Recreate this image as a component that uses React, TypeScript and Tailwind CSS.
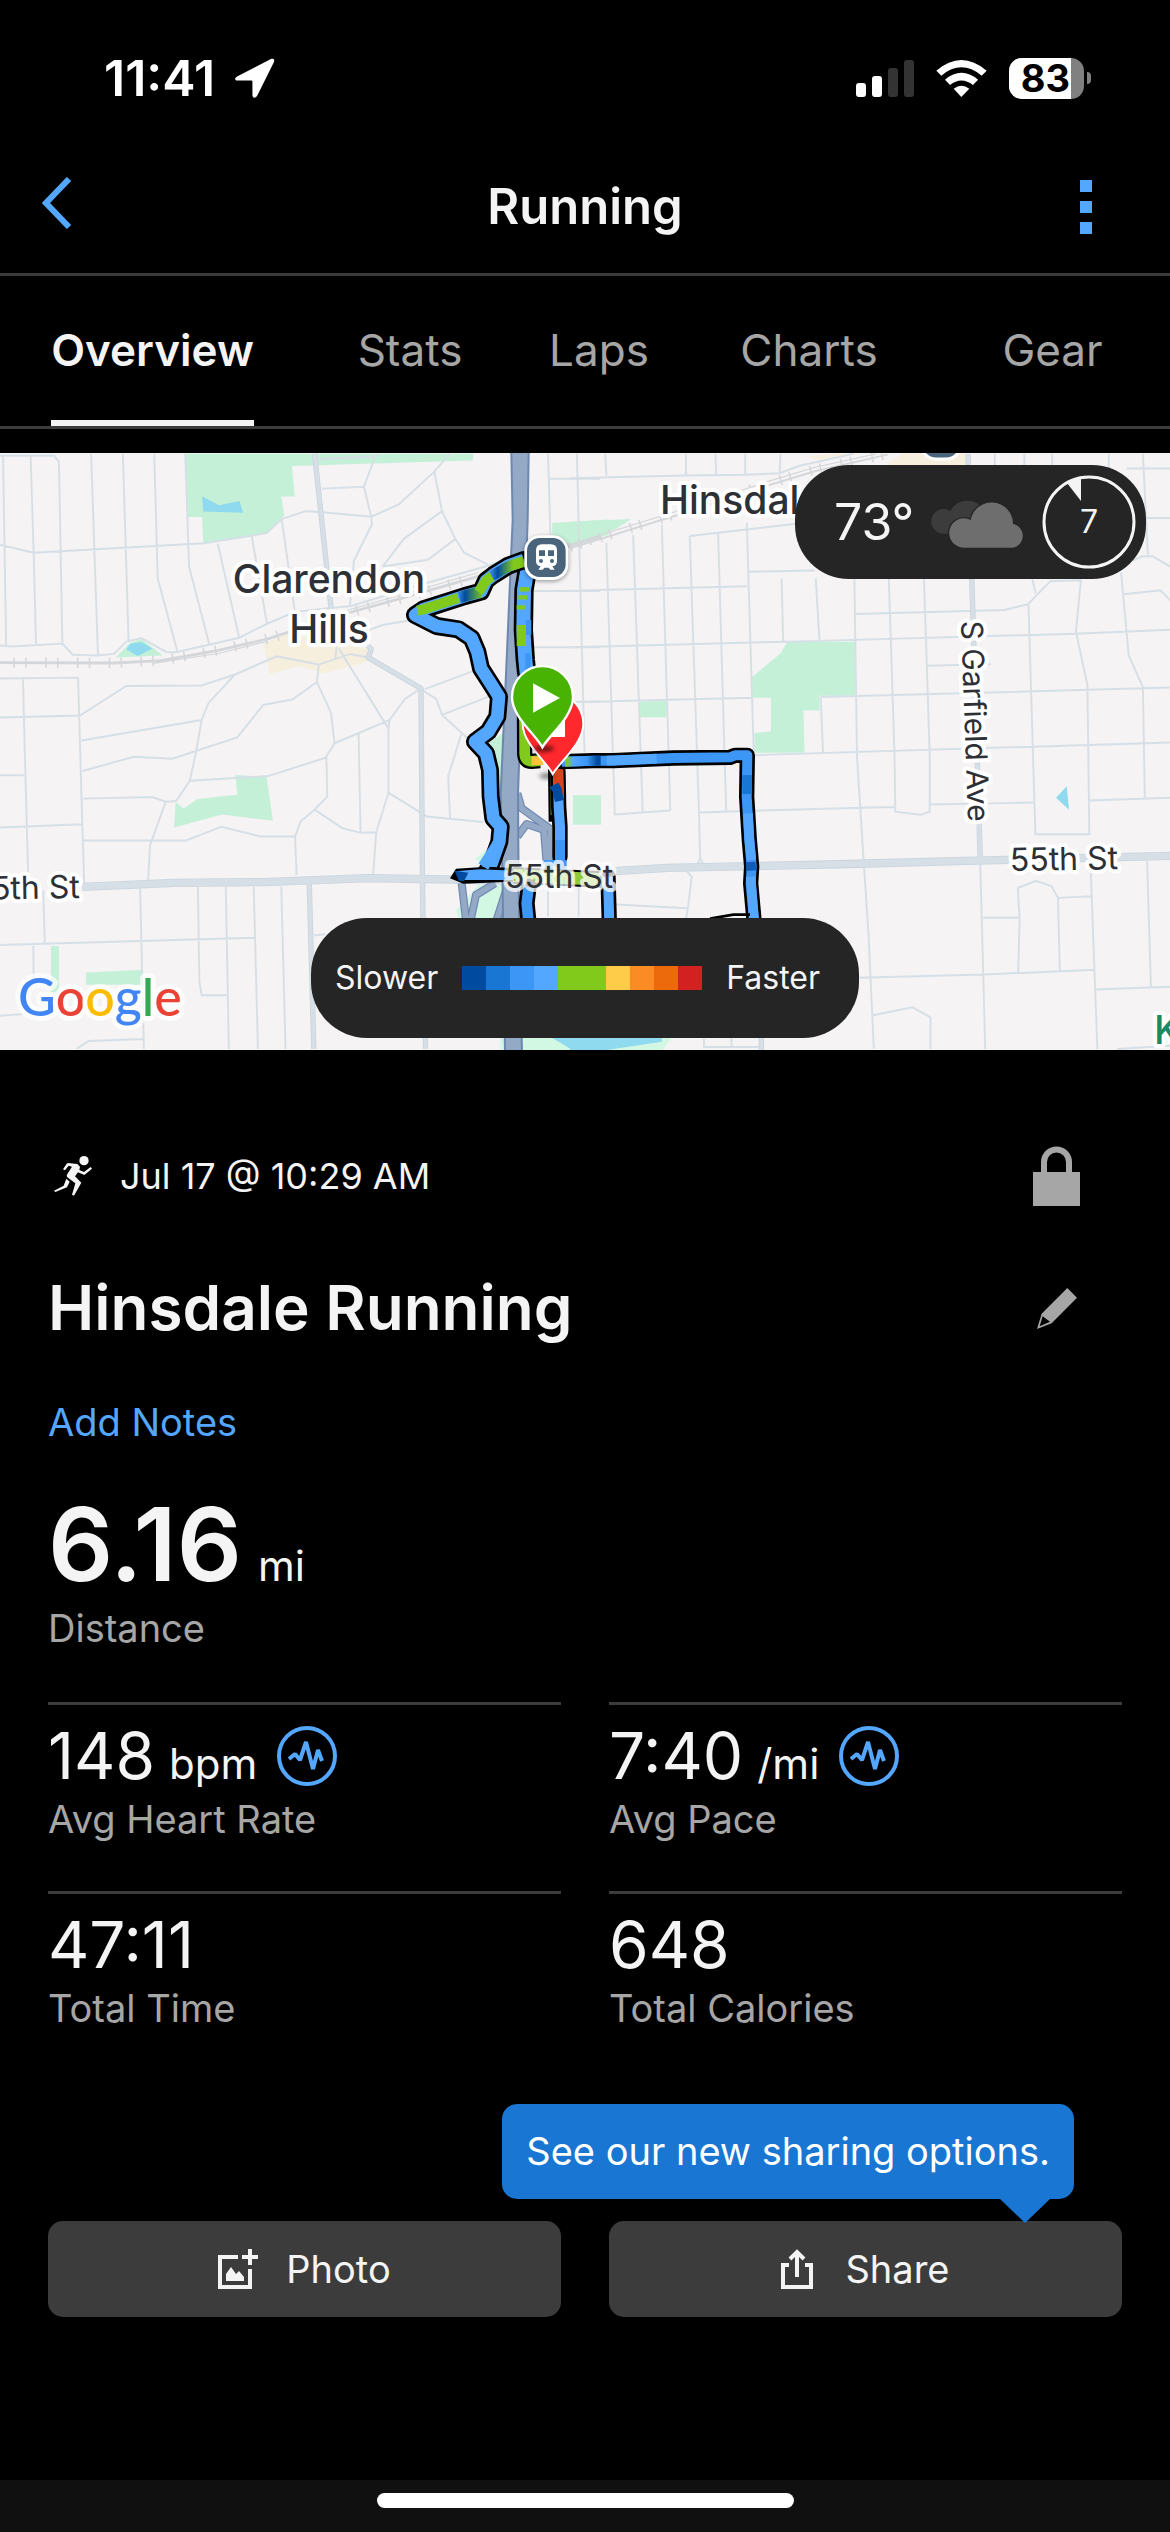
import React, { useState } from 'react';

const tabs = ['Overview', 'Stats', 'Laps', 'Charts', 'Gear'];

const paceColors = [
  'bg-[#004ba0]',
  'bg-[#1976d2]',
  'bg-[#3c96f5]',
  'bg-[#54a7ff]',
  'bg-[#81ca1c]',
  'bg-[#81ca1c]',
  'bg-[#ffcc4a]',
  'bg-[#fb8c25]',
  'bg-[#ec6a0c]',
  'bg-[#d32020]',
];

const stats = [
  { value: '148', unit: 'bpm', label: 'Avg Heart Rate', chart: true },
  { value: '7:40', unit: '/mi', label: 'Avg Pace', chart: true },
  { value: '47:11', unit: '', label: 'Total Time', chart: false },
  { value: '648', unit: '', label: 'Total Calories', chart: false },
];

const westStreets =
  'M0 40H142L154 56L163 515L190 543L255 545L298 541L330 510L370 501L434 536L460 537L546 518L625 500L695 466L770 435L865 425L918 420L1085 370L1250 325L1375 290' +
  'M8 40L16 520M80 40L88 285L94 515M0 520L30 522L163 515M238 35L247 290L256 545M321 35L336 510M403 35L412 350L463 533M484 35L494 320L547 518' +
  'M0 265L88 285L533 261L652 243L698 235L736 200L798 180L836 182L970 194L1042 163L1135 80L1175 35M569 262L625 500M658 245L698 466M736 200L770 430' +
  'M842 123L951 118L970 194L972 213L925 305L914 420M951 118L978 48L988 36M832 48L978 42M1135 80L1155 180L1190 250L1213 285L1275 315M1155 180L1055 250L1000 320M1190 250L1118 303L1000 320' +
  'M0 603L204 601L215 970L220 1120M60 603L64 760L74 1115M0 702L209 697L330 622L527 621L614 593L723 547L833 568L915 541L962 550' +
  'M614 593L545 665L527 708L512 790L496 862L460 913L433 915L392 1025L387 1115M213 760L527 708M216 837L350 801L450 806L620 752L688 670L765 656L828 612L833 568' +
  'M828 612L865 690L874 767L1018 708L1058 655L1100 628M874 767L853 800L855 902L822 935L785 965L771 1003L775 1100M0 848H62M496 862L700 850L853 803M218 907L398 903L433 915' +
  'M0 980L215 972M217 1013H487L578 978L682 1003H771M822 935L895 982L940 993L983 992L1015 892V730L885 527M1015 892L1115 952L1262 966M983 992L975 1100M937 742L942 992M1018 708L1015 730' +
  'M1102 632L1140 655L1155 695L1222 755M1155 695L1300 640M1110 630L1262 575M1205 745L1171 850L1176 957M880 520L876 552M965 480L1000 468L1075 455' +
  'M113 1140L117 1272M0 1277L664 1259M366 1130L376 1540M517 1130L521 1370L527 1404H592M590 1130L598 1540M663 1130L674 1540M735 1130L746 1540M820 1253L850 1250M87 1275L88 1360M0 1456L60 1452M200 1540L232 1520L376 1515' +
  'M1432 35L1440 300M1437 98H1568M1385 382H1568M1395 524H1568M1480 662H1568M1432 1130V1205M1512 1130V1205';

const eastStreets =
  'M18 35L38 790M92 35L95 90M95 260L117 947L262 937M165 240L190 942M240 215L262 937M303 35V90M313 243L337 940L340 1060M380 35L382 88M387 235L408 937M458 35V88M462 210L480 790M550 35L548 85' +
  'M0 97L300 90L458 88L548 84L600 65L740 35M313 243L590 212M467 333L640 330M0 381L463 370M0 524L570 510L650 508L1320 490L1568 480M0 663L475 652M655 650L1568 626M480 797L1568 765M335 942L760 930L848 928M940 922L1210 917M1357 912L1568 905' +
  'M553 350L557 508M642 350L652 508M743 350L750 800L767 1060L780 1250L794 1540M833 350L848 800L850 940L915 948L940 940V800L925 350M655 650L661 790' +
  'M748 440L1135 430L1197 415L1255 357L1335 355L1322 485L1352 620L1357 997H1216L1198 415M1208 352L1217 388M1440 335L1460 545L1497 625L1502 905M1447 390L1543 380L1568 405M1470 305L1495 294H1522L1568 320M933 571L1100 567' +
  'M1110 35V63M1187 35V63M1260 35V63M1408 35V85M1497 35L1510 290M1455 72H1568M1500 197H1568' +
  'M1072 1070L1085 1540M1170 1133L1217 1115L1258 1128L1275 1158L1280 1343M1170 1133L1175 1208L1171 1348M1080 1208H1175M1275 1158L1362 1154M1361 1095L1378 1540M755 1360L1080 1352L1370 1340M1508 1065L1518 1385M1375 1390L1568 1383M792 1455L895 1435L942 1460V1540M1430 1540L1568 1532' +
  'M120 1175L308 1184L318 1105L305 1090M332 1075L340 1058L350 1075M308 1184L303 1210M350 1515V1535H495M422 1512V1535';

const westLoop =
  'M432 120L385 137L340 165L318 182L303 215L255 228L130 268L105 285L170 318L235 328L275 355L292 395L303 445L335 495L357 530L352 590L325 635L285 665L318 700L330 750L332 830L340 895L362 920L358 965L335 1030L320 1055';

const creekLoop = 'M442 150L432 210L430 330L436 420L440 460';

const eastLoop = 'M545 725L640 722L700 722L880 714L1050 712L1065 706L1102 706L1100 830L1108 960L1115 1040L1112 1090L1122 1200';

function RoutePiece({ d, color = '#54a7ff', width = 38 }: { d: string; color?: string; width?: number }) {
  return (
    <g fill="none" strokeLinejoin="round">
      <path d={d} stroke="#000" strokeWidth={width + 16} strokeLinecap="round" />
      <path d={d} stroke={color} strokeWidth={width} />
    </g>
  );
}

function RouteMap() {
  return (
    <svg
      viewBox="0 0 1170 597"
      preserveAspectRatio="xMidYMid slice"
      className="block h-[597px] w-full bg-[#f5f3f4]"
      role="img"
      aria-label="Route map"
    >
      <defs>
        <linearGradient id="pace-a" gradientUnits="userSpaceOnUse" x1="225" y1="0" x2="310" y2="0">
          <stop offset="0" stopColor="#54a7ff" />
          <stop offset="0.35" stopColor="#004ba0" />
          <stop offset="1" stopColor="#81ca1c" />
        </linearGradient>
        <linearGradient id="pace-b" gradientUnits="userSpaceOnUse" x1="322" y1="0" x2="400" y2="0">
          <stop offset="0" stopColor="#54a7ff" />
          <stop offset="0.4" stopColor="#004ba0" />
          <stop offset="1" stopColor="#81ca1c" />
        </linearGradient>
        <linearGradient id="pace-c" gradientUnits="userSpaceOnUse" x1="560" y1="0" x2="662" y2="0">
          <stop offset="0" stopColor="#81ca1c" />
          <stop offset="0.2" stopColor="#54a7ff" />
          <stop offset="0.6" stopColor="#3c96f5" />
          <stop offset="0.9" stopColor="#004ba0" />
        </linearGradient>
        <filter id="soft" x="-50%" y="-50%" width="200%" height="200%">
          <feGaussianBlur stdDeviation="7" />
        </filter>
      </defs>

      {/* west half */}
      <g transform="translate(0 -13) scale(.3827 .3954)">
        <g fill="#c5f0d8">
          <path d="M484 35H1236V52L763 66L770 143H735L743 190L700 235L652 243L531 260L528 195H490Z" />
          <path d="M615 847L697 852L713 963L580 947L455 980L459 916L480 932L515 908L620 897Z" />
          <path d="M302 550L340 513L370 503L425 545Z" />
          <path d="M133 1280H154V1400H133Z" />
          <path d="M225 1347L374 1340V1378H225Z" />
          <path d="M1270 770L1315 740V950H1290Z" />
          <path d="M1443 210L1590 201V240L1443 275Z" />
        </g>
        <path d="M1192 1190L1250 1125H1330V1215H1200ZM1240 1060L1280 1030V1080ZM1307 1500H1600V1545H1307Z" fill="#d2f7e2" />
        <g fill="#8fdaee">
          <path d="M528 142L572 165L626 154L635 184L531 181Z" />
          <path d="M330 530L340 515L370 511L398 528L360 546Z" />
          <path d="M1435 1508H1600V1545H1500Z" />
        </g>
        <path d="M688 515L752 490L970 530L960 560L850 590L780 572L705 592Z" fill="#f6efdd" />
        <path d={westStreets} fill="none" stroke="#d6dfe6" strokeWidth="5" />
        <g fill="none" stroke="#d4d6d9">
          <path d="M0 563L300 564L420 558L570 532L700 503L900 440L1050 400L1250 345M1430 285L1568 245" strokeWidth="7" />
          <path d="M400 565L570 540L700 509M900 433L1250 335M1430 278L1568 240" strokeWidth="3" />
          <path d="M35 563L300 564L420 558L570 532L700 503L900 440L1050 400L1250 345M1430 285L1568 245" strokeWidth="26" strokeDasharray="4 27 4 48" />
        </g>
        <g fill="none" strokeLinejoin="round">
          <path d="M822 35L865 425M962 520L970 530L962 550L1100 628L1104 1120L1105 1205L1112 1540M808 1120L820 1540" stroke="#c8d4dd" strokeWidth="14" />
          <path d="M215 1130L455 1120L690 1118L960 1108L1330 1114" stroke="#c8d4dd" strokeWidth="21" />
          <path d="M822 35L865 425M962 520L970 530L962 550L1100 628L1104 1120L1105 1205L1112 1540M808 1120L820 1540" stroke="#d6dfe6" strokeWidth="10" />
          <path d="M215 1130L455 1120L690 1118L960 1108L1330 1114" stroke="#d6dfe6" strokeWidth="17" />
        </g>
      </g>

      {/* east half */}
      <g transform="translate(570 -13) scale(.3827 .3954)">
        <g fill="#c5f0d8">
          <path d="M0 207L160 200L120 225L0 265Z" />
          <path d="M568 510H746V647H652V684H610L613 791H482V741L525 737V652H475V600L550 540Z" />
          <path d="M182 662L252 659V701H182Z" />
          <path d="M8 898H81V973H8Z" />
        </g>
        <path d="M100 1500H275L240 1545H100Z" fill="#d2f7e2" />
        <path d="M1270 905L1298 876L1304 935ZM0 1500H240V1522L80 1545H0Z" fill="#8fdaee" />
        <path d="M620 42L700 35H760L650 50ZM825 62L870 35H1035V70Z" fill="#f6efdd" />
        <path d={eastStreets} fill="none" stroke="#d6dfe6" strokeWidth="5" />
        <g fill="none" stroke="#d4d6d9">
          <path d="M0 274L300 184L520 114L640 79L830 37" strokeWidth="5" />
          <path d="M0 264L300 174L520 104L640 69L800 35" strokeWidth="3" />
          <path d="M0 270L300 180L520 110L640 75L830 35" strokeWidth="26" strokeDasharray="4 22 4 52" />
        </g>
        <g fill="none">
          <path d="M1040 35L1072 1060M500 1500V1545" stroke="#c8d4dd" strokeWidth="14" />
          <path d="M40 1095L255 1082L700 1073L1060 1064L1568 1052" stroke="#c8d4dd" strokeWidth="21" />
          <path d="M1040 35L1072 1060M500 1500V1545" stroke="#d6dfe6" strokeWidth="10" />
          <path d="M40 1095L255 1082L700 1073L1060 1064L1568 1052" stroke="#d6dfe6" strokeWidth="17" />
        </g>
      </g>

      {/* expressway, ramps and the recorded route */}
      <g transform="translate(380 67) scale(.33333)">
        <g fill="none" strokeLinejoin="round">
          <path
            d="M412 820L425 865L512 928L508 1030M412 950L440 912L492 930L500 1030M245 1090L258 1200M272 1200L288 1125L345 1090M385 1090L350 1200"
            stroke="#6c87b0"
            strokeWidth="24"
          />
          <path
            d="M412 820L425 865L512 928L508 1030M412 950L440 912L492 930L500 1030M245 1090L258 1200M272 1200L288 1125L345 1090M385 1090L350 1200"
            stroke="#94a9c6"
            strokeWidth="17"
          />
        </g>
        <path d="M394 -205L398 0L376 510L362 820L368 1110L375 1600H426L416 1110L414 820L430 380L443 0L446 -205Z" fill="#94a9c6" stroke="#6c87b0" strokeWidth="6" />

        <RoutePiece d={creekLoop} width={42} />
        <RoutePiece d={westLoop} />
        <path d="M235 234L130 268L112 272" fill="none" stroke="#81ca1c" strokeWidth="30" />
        <path d="M238 233L255 228L303 215" fill="none" stroke="url(#pace-a)" strokeWidth="34" />
        <path d="M296 216L318 182L340 165" fill="none" stroke="#81ca1c" strokeWidth="30" />
        <path d="M335 168L385 139L432 124" fill="none" stroke="url(#pace-b)" strokeWidth="32" />
        <path d="M418 208H447M415 232H441M410 262H436" stroke="#81ca1c" strokeWidth="13" />
        <path d="M424 315V378" stroke="#81ca1c" strokeWidth="28" />
        <path d="M446 300V345M444 400V450" stroke="#3c96f5" strokeWidth="16" />

        <path d="M433 480L434 700Q434 724 455 724L480 722" fill="none" stroke="#000" strokeWidth="46" />
        <path d="M433 480L434 700Q434 724 455 724L480 722" fill="none" stroke="#81ca1c" strokeWidth="32" />
        <path d="M455 722H490" stroke="#fbc23a" strokeWidth="26" />

        <path d="M518 745L520 905" stroke="#000" strokeWidth="28" />
        <path d="M519 760V810" stroke="#fbc23a" strokeWidth="14" />
        <path d="M519 810V885" stroke="#81ca1c" strokeWidth="14" />
        <RoutePiece d="M534 755L536 860L540 920V1010" width={30} />
        <path d="M535 745L537 835" stroke="#d6431c" strokeWidth="30" />
        <path d="M508 802L535 788L545 805L551 840L525 846L518 815Z" fill="#004ba0" />
        <path d="M540 960V1032" stroke="#3c96f5" strokeWidth="30" />

        <RoutePiece d={eastLoop} color="#3c96f5" width={30} />
        <path d="M555 725L640 722L662 722" fill="none" stroke="url(#pace-c)" strokeWidth="30" />
        <path d="M680 722L830 716M1104 880L1108 960L1114 1020M1112 1070L1122 1200" fill="none" stroke="#54a7ff" strokeWidth="29" />
        <path d="M1101 765L1102 822" stroke="#1976d2" strokeWidth="29" />
        <path d="M1112 1026L1114 1052" stroke="#0e5cb8" strokeWidth="29" />
        <path d="M990 1196L1060 1184H1110" fill="none" stroke="#000" strokeWidth="8" />

        <path d="M210 1075L228 1046L320 1040L400 1044V1085L250 1091Z" fill="#000" />
        <path d="M310 1040L358 965" stroke="#54a7ff" strokeWidth="34" />
        <path d="M226 1054L300 1048L400 1052V1080H250Z" fill="#54a7ff" />
        <path d="M224 1052L265 1058L252 1084L236 1082Z" fill="#004ba0" />
        <path d="M490 1020H560V1050H490Z" fill="#3c96f5" />
        <path d="M400 1066L700 1080" stroke="#000" strokeWidth="50" />
        <path d="M400 1066L700 1080" stroke="#8fc93a" strokeWidth="38" />
        <RoutePiece d="M446 1100L440 1150L446 1210" width={32} color="#3c96f5" />
        <RoutePiece d="M684 1070L688 1210" width={30} />

        {/* station */}
        <rect x="433" y="50" width="132" height="134" rx="46" fill="#000" opacity="0.4" filter="url(#soft)" />
        <rect x="433" y="46" width="132" height="134" rx="46" fill="#fff" />
        <rect x="441" y="54" width="116" height="117" rx="38" fill="#4a647c" />
        <path d="M486 73H513Q531 73 531 91V124Q531 138 517 139L524 149H511L506 143H493L488 149H475L482 139Q468 138 468 124V91Q468 73 486 73Z" fill="#fff" />
        <path d="M477 91H495V108H477ZM504 91H522V108H504Z" fill="#4a647c" />
        <circle cx="483" cy="123" r="6" fill="#4a647c" />
        <circle cx="516" cy="123" r="6" fill="#4a647c" />

        {/* finish and start pins */}
        <ellipse cx="500" cy="768" rx="22" ry="9" fill="#000" opacity="0.45" filter="url(#soft)" />
        <path d="M518 762C500 725 428 670 428 612A91 93 0 0 1 610 612C610 670 540 725 518 762Z" fill="#ff282c" stroke="#fff" strokeWidth="6" />
        <path d="M486 585H555V651H486Z" fill="#fff" />
        <ellipse cx="492" cy="686" rx="30" ry="9" fill="#000" opacity="0.6" filter="url(#soft)" />
        <path d="M487 682C468 645 396 590 396 532A91 93 0 0 1 579 532C579 590 508 645 487 682Z" fill="#48b302" stroke="#fff" strokeWidth="7" />
        <path d="M459 490L540 534L459 578Z" fill="#fff" />
      </g>
      <rect x="921" y="-38" width="40" height="44" rx="15" fill="#4a647c" stroke="#fff" strokeWidth="3" />

      <g fontFamily="Inter, sans-serif" fill="#2d3035" stroke="#fff" strokeLinejoin="round" strokeWidth="8" paintOrder="stroke">
        <g fontSize="39" fontWeight="500">
          <text x="329" y="140" textAnchor="middle">Clarendon</text>
          <text x="329" y="190" textAnchor="middle">Hills</text>
          <text x="660" y="61">Hinsdale</text>
          <text x="1154" y="591" fill="#1b8a64">K</text>
        </g>
        <g fontSize="32">
          <text x="80" y="445" textAnchor="end" transform="rotate(-1 80 445)">55th St</text>
          <text x="505" y="435" strokeOpacity="0.75">55th St</text>
          <text x="1010" y="418" transform="rotate(-1 1010 418)">55th St</text>
        </g>
        <text fontSize="30" transform="translate(961 168) rotate(88)">S Garfield Ave</text>
      </g>
      <text x="18" y="563" fontFamily="Lato, sans-serif" fontSize="52" fontWeight="500" stroke="#fff" strokeOpacity="0.7" strokeWidth="10" strokeLinejoin="round" paintOrder="stroke">
        <tspan fill="#4285f4">G</tspan>
        <tspan fill="#ea4335">o</tspan>
        <tspan fill="#fbbc05">o</tspan>
        <tspan fill="#4285f4">g</tspan>
        <tspan fill="#34a853">l</tspan>
        <tspan fill="#ea4335">e</tspan>
      </text>
    </svg>
  );
}

function StatusBar() {
  return (
    <div className="flex h-[141px] items-center justify-between pt-[15px] pr-[79px] pl-[104px] text-white">
      <div className="flex items-center gap-5">
        <span className="text-[50px] leading-[60px] font-semibold">11:41</span>
        <svg viewBox="0 0 39 39" className="size-10" fill="currentColor">
          <path d="M35 1L2 18C-1 20 0 22 2 22H16Q17 22 17 23V36C17 39 20 40 22 36L38 4C39 1 37 0 35 1Z" />
        </svg>
      </div>
      <div className="flex items-center gap-[22px]">
        <svg viewBox="0 0 58 37" className="h-[37px] w-[58px]">
          <rect x="0" y="23" width="10" height="14" rx="3" fill="#fff" />
          <rect x="16" y="16" width="10" height="21" rx="3" fill="#fff" />
          <rect x="32" y="8" width="10" height="29" rx="3" fill="#333" />
          <rect x="48" y="0" width="10" height="37" rx="3" fill="#333" />
        </svg>
        <svg viewBox="0 0 151 111" className="h-[37px] w-[51px]" fill="#fff">
          <path d="M0 32Q75 -32 151 32L136 47Q75 -3 15 47Z" />
          <path d="M26 59Q75 18 125 59L110 75Q75 48 41 75Z" />
          <path d="M52 86Q75 68 99 86L75 111Z" />
        </svg>
        <div className="flex items-center gap-[3px]">
          <div className="w-[75px] rounded-[13px] bg-[#808080]">
            <div className="w-[62px] rounded-l-[13px] bg-white pr-px text-right text-[38px] leading-[41px] font-bold text-black">83</div>
          </div>
          <div className="h-[12px] w-[4px] rounded-r-full bg-[#808080]" />
        </div>
      </div>
    </div>
  );
}

function PulseIcon() {
  return (
    <svg viewBox="0 0 60 60" className="size-[60px]" fill="none" stroke="#54a7ff">
      <circle cx="30" cy="30" r="28" strokeWidth="4" />
      <path d="M12 33L18 28L23 34L29 16L36 43L41 24L45 35" strokeWidth="4" strokeLinejoin="bevel" />
    </svg>
  );
}

function WeatherPill() {
  return (
    <div className="absolute top-3 right-6 flex h-[114px] w-[351px] items-center rounded-[54px] bg-[#252525] pr-[10px] pl-[39px] text-[#f4f4f4]">
      <span className="text-[50px] leading-[60px]">73°</span>
      <svg viewBox="0 0 282 156" className="mr-[17px] ml-auto h-[52px] w-[94px]">
        <path d="M38 113A37 37 0 1 1 58 45A58 58 0 0 1 160 45V113Z" fill="#3c3c3c" />
        <path
          d="M98 155A44 44 0 1 1 119 72A64 64 0 0 1 246 84A36 36 0 0 1 245 155Z"
          fill="#6e6e6e"
          stroke="#252525"
          strokeWidth="8"
          paintOrder="stroke"
        />
      </svg>
      <div className="relative flex size-[94px] items-center justify-center">
        <svg viewBox="0 0 94 94" className="absolute inset-0 size-full">
          <circle cx="47" cy="47" r="45" fill="none" stroke="#f4f4f4" strokeWidth="3" />
          <path d="M39 2V26L25 8Z" fill="#f4f4f4" />
        </svg>
        <span className="text-[32px] leading-[40px]">7</span>
      </div>
    </div>
  );
}

export default function App() {
  const [activeTab, setActiveTab] = useState('Overview');

  return (
    <div className="flex min-h-screen flex-col bg-black font-['Inter',sans-serif] text-[#f4f4f4]">
      <StatusBar />

      <header className="grid h-[135px] grid-cols-[1fr_auto_1fr] items-center border-b-[3px] border-[#3c3c3c] px-[42px]">
        <button aria-label="Back" className="justify-self-start">
          <svg viewBox="0 0 30 52" className="mb-2 h-[52px] w-[30px]" fill="none" stroke="#54a7ff" strokeWidth="6">
            <path d="M27 2L4 26L27 50" />
          </svg>
        </button>
        <h1 className="text-[49px] leading-[60px] font-semibold">Running</h1>
        <button aria-label="More options" className="flex flex-col gap-[9px] justify-self-end px-9">
          <span className="size-3 bg-[#54a7ff]" />
          <span className="size-3 bg-[#54a7ff]" />
          <span className="size-3 bg-[#54a7ff]" />
        </button>
      </header>

      <nav className="grid h-[153px] grid-cols-[305fr_210fr_168fr_252fr_235fr] justify-items-center border-b-[3px] border-[#3c3c3c]">
        {tabs.map((tab) => (
          <button
            key={tab}
            onClick={() => setActiveTab(tab)}
            className={`border-b-[6px] pt-1 text-[44px] leading-[56px] ${
              tab === activeTab ? 'border-[#f4f4f4] font-semibold text-[#f4f4f4]' : 'border-transparent text-[#a6a6a6]'
            }`}
          >
            {tab}
          </button>
        ))}
      </nav>

      <section className="relative mt-6">
        <RouteMap />
        <WeatherPill />
        <div className="absolute inset-x-0 bottom-3 flex justify-center">
          <div className="flex h-[120px] w-[548px] items-center gap-6 rounded-[56px] bg-[#252525] px-6 text-[32px] leading-[40px]">
            <span>Slower</span>
            <div className="flex">
              {paceColors.map((color, i) => (
                <span key={i} className={`size-6 ${color}`} />
              ))}
            </div>
            <span>Faster</span>
          </div>
        </div>
      </section>

      <main className="px-12">
        <div className="mt-24 flex h-[60px] items-center justify-between pr-[42px]">
          <div className="flex items-center gap-7 pl-1.5">
            <svg viewBox="0 0 114 120" className="h-[40px] w-[38px]" fill="#f4f4f4">
              <circle cx="90" cy="14" r="14" />
              <path d="M42 21L70 24L78 32L76 42L90 48L110 33L114 38L91 57L72 49L63 61L82 80L60 119L54 116L64 82L40 64Q36 60 40 54L54 32L44 29L33 43L27 40L38 23Z" />
              <path d="M37 68L47 77L39 94L4 108L0 104L29 89Z" />
            </svg>
            <span className="text-[36px] leading-[48px]">Jul 17 @ 10:29 AM</span>
          </div>
          <button aria-label="Privacy">
            <svg viewBox="0 0 47 60" className="h-[60px] w-[47px]">
              <path d="M0 26H47V60H0Z" fill="#a6a6a6" />
              <path d="M11 28V16A12 12 0 0 1 36 16V28" fill="none" stroke="#a6a6a6" strokeWidth="6" />
            </svg>
          </button>
        </div>

        <div className="mt-16 flex items-center justify-between pr-[45px]">
          <h2 className="text-[62px] leading-[76px] font-semibold">Hinsdale Running</h2>
          <button aria-label="Edit title">
            <svg viewBox="0 0 120 123" className="h-[41px] w-[40px]">
              <path d="M91 0L120 29L44 106L0 123L14 77Z" fill="#a6a6a6" />
              <path d="M17 85L39 101L8 115Z" fill="#000" />
            </svg>
          </button>
        </div>

        <button className="mt-[52px] block text-[38px] leading-[48px] text-[#54a7ff]">Add Notes</button>

        <div className="mt-12 flex items-baseline gap-4">
          <span className="text-[102px] leading-[100px] font-semibold">6.16</span>
          <span className="text-[42px] leading-[56px]">mi</span>
        </div>
        <p className="mt-2.5 text-[38px] leading-[48px] text-[#a6a6a6]">Distance</p>

        <div className="mt-[50px] grid grid-cols-2 gap-x-12">
          {stats.map((stat) => (
            <div key={stat.label} className="border-t-[3px] border-[#3c3c3c] pt-[15px] pb-12">
              <div className="flex h-[72px] items-center gap-5">
                <div className="flex items-baseline gap-3.5">
                  <span className="text-[64px] leading-[72px]">{stat.value}</span>
                  {stat.unit && <span className="text-[42px] leading-[56px]">{stat.unit}</span>}
                </div>
                {stat.chart && (
                  <button aria-label={`${stat.label} chart`}>
                    <PulseIcon />
                  </button>
                )}
              </div>
              <p className="mt-[3px] text-[38px] leading-[48px] text-[#a6a6a6]">{stat.label}</p>
            </div>
          ))}
        </div>

        <div className="mt-[141px] grid grid-cols-2 gap-x-12 text-[38px] leading-[48px]">
          <button className="flex h-24 items-center justify-center gap-7 rounded-[15px] bg-[#3c3c3c]">
            <svg viewBox="0 0 40 40" className="size-10" fill="#f4f4f4">
              <path d="M0 6H20V10H4V36H30V20H34V40H0Z" />
              <path d="M24 6H30V0H34V6H40V10H34V16H30V10H24Z" />
              <path d="M8 32V25L13 18L18 25L21 22L26 28V32Z" />
            </svg>
            Photo
          </button>
          <div className="relative">
            <button className="flex h-24 w-full items-center justify-center gap-8 rounded-[15px] bg-[#3c3c3c]">
              <svg viewBox="0 0 32 40" className="h-10 w-8" fill="none" stroke="#f4f4f4" strokeWidth="4">
                <path d="M8 16H2V38H30V16H24M16 28V4M9 10L16 3L23 10" />
              </svg>
              Share
            </button>
            <div role="tooltip" className="absolute right-12 bottom-full mb-[22px] rounded-[15px] bg-[#1976d2] px-6 py-6 leading-[47px] whitespace-nowrap text-white">
              See our new sharing options.
              <svg viewBox="0 0 50 24" className="absolute top-full right-6 h-6 w-[50px]" fill="#1976d2">
                <path d="M0 0H50L25 24Z" />
              </svg>
            </div>
          </div>
        </div>
      </main>

      <footer className="mt-auto flex h-[52px] justify-center bg-[#101010] pt-[13px]">
        <div className="h-[15px] w-[417px] rounded-full bg-white" />
      </footer>
    </div>
  );
}
